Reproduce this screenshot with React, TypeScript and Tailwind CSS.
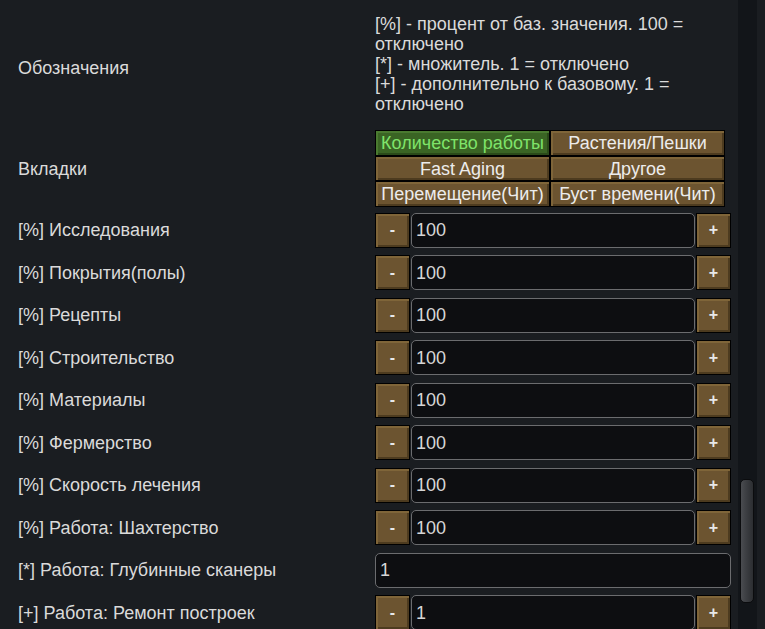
import React from 'react';

const rows: { label: string; value: string; kind: 'step' | 'plain' }[] = [
  { label: '[%] Исследования', value: '100', kind: 'step' },
  { label: '[%] Покрытия(полы)', value: '100', kind: 'step' },
  { label: '[%] Рецепты', value: '100', kind: 'step' },
  { label: '[%] Строительство', value: '100', kind: 'step' },
  { label: '[%] Материалы', value: '100', kind: 'step' },
  { label: '[%] Фермерство', value: '100', kind: 'step' },
  { label: '[%] Скорость лечения', value: '100', kind: 'step' },
  { label: '[%] Работа: Шахтерство', value: '100', kind: 'step' },
  { label: '[*] Работа: Глубинные сканеры', value: '1', kind: 'plain' },
  { label: '[+] Работа: Ремонт построек', value: '1', kind: 'step' },
];

const tabs = [
  'Количество работы',
  'Растения/Пешки',
  'Fast Aging',
  'Другое',
  'Перемещение(Чит)',
  'Буст времени(Чит)',
];

const StepButton = ({ sign }: { sign: string }) => (
  <button className="w-[35px] h-[35px] shrink-0 border border-black bg-[#6c5430] shadow-[inset_2px_2px_0_#7f6539,inset_-2px_-2px_0_#4d3b1f] text-[#e8e8e8] text-[16px] font-bold leading-none flex items-center justify-center">
    {sign}
  </button>
);

const Field = ({ value }: { value: string }) => (
  <div className="flex-1 h-[35px] rounded-[5px] border border-[#6b6c6f] bg-[#0d0e11] pl-[4px] flex items-center text-[18px] text-[#d6d6d6]">
    {value}
  </div>
);

export default function App() {
  return (
    <div
      className="w-[765px] h-[629px] overflow-hidden bg-[#1a1d21] flex text-[#dadada] text-[18px] leading-[20px]"
      style={{ fontFamily: '"Liberation Sans", Arial, sans-serif' }}
    >
      <div className="w-[738px] shrink-0 pt-[14px]">
        <div className="flex items-center">
          <div className="w-[375px] shrink-0 pl-[18px] pt-[8px]">Обозначения</div>
          <div className="w-[330px]">
            <div>[%] - процент от баз. значения. 100 = отключено</div>
            <div>[*] - множитель. 1 = отключено</div>
            <div>[+] - дополнительно к базовому. 1 = отключено</div>
          </div>
        </div>

        <div className="flex items-center mt-[16px]">
          <div className="w-[375px] shrink-0 pl-[18px]">Вкладки</div>
          <div className="w-[350px] grid grid-cols-2 gap-[2px] bg-black p-px">
            {tabs.map((t, i) => (
              <div
                key={t}
                className={
                  i === 0
                    ? 'h-[23.7px] flex items-center justify-center bg-[#3a6424] shadow-[inset_2px_2px_0_#4a7a30,inset_-2px_-2px_0_#2a4a19] text-[#7fe36a] whitespace-nowrap'
                    : 'h-[23.7px] flex items-center justify-center bg-[#6c5430] shadow-[inset_2px_2px_0_#7f6539,inset_-2px_-2px_0_#4d3b1f] text-[#ececec] whitespace-nowrap'
                }
              >
                {t}
              </div>
            ))}
          </div>
        </div>

        <div className="flex flex-col gap-[7.5px] mt-[5.5px]">
          {rows.map((r) => (
            <div key={r.label} className="flex items-center h-[35px]">
              <div className="w-[375px] shrink-0 pl-[18px]">{r.label}</div>
              <div className="w-[356px] flex gap-px items-center">
                {r.kind === 'step' ? (
                  <>
                    <StepButton sign="-" />
                    <Field value={r.value} />
                    <StepButton sign="+" />
                  </>
                ) : (
                  <Field value={r.value} />
                )}
              </div>
            </div>
          ))}
        </div>
      </div>

      <div className="relative w-[19px] shrink-0 h-full bg-[#121519]">
        <div className="absolute left-[2px] top-[479px] w-[14px] h-[124px] rounded-[5px] border border-[#0b0c0e] bg-gradient-to-r from-[#4a4c50] via-[#3a3c40] to-[#2c2e31]" />
      </div>
      <div className="flex-1" />
    </div>
  );
}
